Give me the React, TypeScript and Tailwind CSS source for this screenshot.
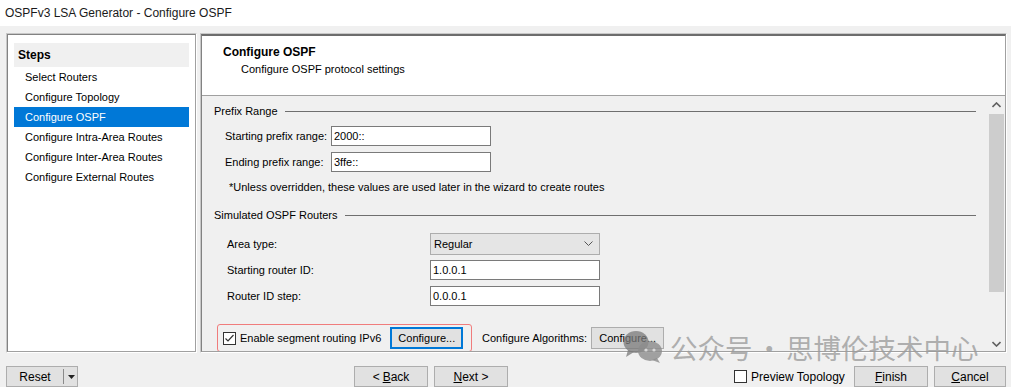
import { ReactNode } from "react";

const steps = [
    "Select Routers",
    "Configure Topology",
    "Configure OSPF",
    "Configure Intra-Area Routes",
    "Configure Inter-Area Routes",
    "Configure External Routes",
];

const WinButton = (props: { children: ReactNode; className?: string; focused?: boolean }) => (
    <div
        className={`flex items-center justify-center h-[21px] bg-[#e1e1e1] ${
            props.focused ? "border-2 border-[#0078d7]" : "border border-[#adadad]"
        } ${props.className ?? ""}`}
    >
        {props.children}
    </div>
);

const TextBox = (props: { value: string; className?: string }) => (
    <div className={`h-[20px] bg-white border border-[#7a7a7a] flex items-center pl-[2px] ${props.className ?? ""}`}>
        {props.value}
    </div>
);

const GroupLabel = (props: { text: string }) => (
    <div className="flex items-center h-[14px] pl-[12px] pr-[12px]">
        <span>{props.text}</span>
        <div className="ml-[7px] flex-1 h-px bg-[#6f6f6f]" />
    </div>
);

const CheckBox = () => (
    <div className="w-[13px] h-[13px] border border-[#333] bg-white flex items-center justify-center">
        <svg width="11" height="11" viewBox="0 0 11 11">
            <path d="M1.5 5.5 L4 8 L9.5 2" fill="none" stroke="#333" strokeWidth="1.2" />
        </svg>
    </div>
);

const App = () => {
    return (
        <div className="relative w-[1011px] h-[387px] bg-[#f0f0f0] overflow-hidden text-[11px] text-black font-['Liberation_Sans',Arial,sans-serif]">
            {/* title bar */}
            <div className="h-[26px] bg-white flex items-center pl-[5px] text-[12px] text-[#1a1a1a]">
                OSPFv3 LSA Generator - Configure OSPF
            </div>

            <div className="flex mt-[7px] pl-[6px] pr-[4px]">
                {/* steps panel */}
                <div className="w-[191px] h-[320px] border border-[#c8c8c8] border-r-white border-b-white">
                    <div className="h-full border border-[#828282] border-r-[#a0a0a0] border-b-[#a0a0a0] bg-white pt-[8px] px-[6px]">
                        <div className="h-[24px] bg-[#f0f0f0] flex items-center pl-[4px] font-bold text-[12px]">Steps</div>
                        {steps.map((step, index) => (
                            <div
                                key={index}
                                className={`h-[20px] flex items-center pl-[11px] ${
                                    index === 2 ? "bg-[#0078d7] text-white" : ""
                                }`}
                            >
                                {step}
                            </div>
                        ))}
                    </div>
                </div>

                {/* configure panel */}
                <div className="ml-[3px] flex-1 h-[320px] border border-[#c8c8c8] border-r-white border-b-white">
                    <div className="h-full flex flex-col border border-[#828282] border-t-2 border-t-[#6d6d6d] border-r-[#a0a0a0] border-b-[#a0a0a0] overflow-hidden">
                        <div className="h-[60px] bg-white border-b border-[#a0a0a0] pl-[21px] pt-[9px] shrink-0">
                            <div className="font-bold text-[12px] leading-[14px]">Configure OSPF</div>
                            <div className="pl-[18px] mt-[3px] leading-[14px]">Configure OSPF protocol settings</div>
                        </div>

                        <div className="flex flex-1 min-h-0">
                            <div className="flex-1 flex flex-col pt-[8px]">
                                <GroupLabel text="Prefix Range" />
                                <div className="flex items-center mt-[8px] pl-[23px]">
                                    <span className="w-[106px]">Starting prefix range:</span>
                                    <TextBox value="2000::" className="w-[160px]" />
                                </div>
                                <div className="flex items-center mt-[6px] pl-[23px]">
                                    <span className="w-[106px]">Ending prefix range:</span>
                                    <TextBox value="3ffe::" className="w-[160px]" />
                                </div>
                                <div className="mt-[8px] pl-[27px] h-[14px] leading-[14px]">
                                    *Unless overridden, these values are used later in the wizard to create routes
                                </div>
                                <div className="mt-[14px]">
                                    <GroupLabel text="Simulated OSPF Routers" />
                                </div>
                                <div className="flex items-center mt-[11px] pl-[25px]">
                                    <span className="w-[203px]">Area type:</span>
                                    <div className="w-[170px] h-[22px] bg-[#e5e5e5] border border-[#adadad] flex items-center justify-between pl-[3px] pr-[6px]">
                                        <span>Regular</span>
                                        <svg width="9" height="6" viewBox="0 0 9 6">
                                            <path d="M0.5 0.5 L4.5 4.5 L8.5 0.5" fill="none" stroke="#555" strokeWidth="1" />
                                        </svg>
                                    </div>
                                </div>
                                <div className="flex items-center mt-[5px] pl-[25px]">
                                    <span className="w-[203px]">Starting router ID:</span>
                                    <TextBox value="1.0.0.1" className="w-[170px]" />
                                </div>
                                <div className="flex items-center mt-[6px] pl-[25px]">
                                    <span className="w-[203px]">Router ID step:</span>
                                    <TextBox value="0.0.0.1" className="w-[170px]" />
                                </div>
                                <div className="flex items-center mt-[18px] pl-[15px]">
                                    <div className="w-[255px] h-[28px] border border-[#f07c7c] rounded-[3px] flex items-center pl-[5px]">
                                        <CheckBox />
                                        <span className="ml-[4px]">Enable segment routing IPv6</span>
                                        <WinButton focused className="ml-[9px] w-[73px] h-[22px]">Configure...</WinButton>
                                    </div>
                                    <span className="ml-[10px]">Configure Algorithms:</span>
                                    <WinButton className="ml-[4px] w-[73px] h-[22px]">Configure...</WinButton>
                                </div>
                            </div>

                            {/* scrollbar */}
                            <div className="w-[17px] flex flex-col bg-[#f0f0f0]">
                                <div className="h-[18px] flex items-center justify-center">
                                    <svg width="9" height="6" viewBox="0 0 9 6">
                                        <path d="M0.5 5 L4.5 1 L8.5 5" fill="none" stroke="#606060" strokeWidth="1.6" />
                                    </svg>
                                </div>
                                <div className="h-[178px] bg-[#cdcdcd] mx-[1px]" />
                                <div className="flex-1 flex items-end justify-center pb-[4px]">
                                    <svg width="9" height="6" viewBox="0 0 9 6">
                                        <path d="M0.5 1 L4.5 5 L8.5 1" fill="none" stroke="#606060" strokeWidth="1.6" />
                                    </svg>
                                </div>
                            </div>
                        </div>
                    </div>
                </div>
            </div>

            {/* bottom buttons */}
            <div className="flex items-center mt-[13px] pl-[6px] pr-[5px]">
                <div className="w-[72px] h-[21px] bg-[#e1e1e1] border border-[#adadad] flex items-center">
                    <span className="w-[56px] text-center text-[12px]">Reset</span>
                    <div className="w-px h-[15px] bg-[#8a8a8a]" />
                    <svg className="ml-[4px]" width="7" height="4" viewBox="0 0 7 4">
                        <path d="M0 0 L7 0 L3.5 4 Z" fill="#222" />
                    </svg>
                </div>
                <WinButton className="ml-[276px] w-[74px] text-[12px]">
                    &lt; <span className="underline ml-[3px]">B</span>ack
                </WinButton>
                <WinButton className="ml-[6px] w-[74px] text-[12px]">
                    <span className="underline">N</span>ext &gt;
                </WinButton>
                <div className="ml-[226px] flex items-center">
                    <div className="w-[13px] h-[13px] border border-[#333] bg-white" />
                    <span className="ml-[4px] text-[12px]">Preview Topology</span>
                </div>
                <WinButton className="ml-auto w-[74px] text-[12px]">
                    <span className="underline">F</span>inish
                </WinButton>
                <WinButton className="ml-[6px] w-[72px] text-[12px]">
                    <span className="underline">C</span>ancel
                </WinButton>
            </div>

            {/* watermark */}
            <div className="absolute left-[623px] top-[330px] flex items-center pointer-events-none">
                <svg width="40" height="33" viewBox="0 0 40 33">
                    <ellipse cx="13" cy="12" rx="12.5" ry="11" fill="#7a7a7a" fillOpacity="0.75" />
                    <path d="M5 20 L3 27 L11 22 Z" fill="#7a7a7a" fillOpacity="0.75" />
                    <ellipse cx="27" cy="21" rx="12" ry="10" fill="#8c8c8c" fillOpacity="0.8" />
                    <path d="M34 28 L37 33 L29 30 Z" fill="#8c8c8c" fillOpacity="0.8" />
                    <circle cx="23" cy="20" r="1.6" fill="#d8d8d8" />
                    <circle cx="31" cy="20" r="1.6" fill="#d8d8d8" />
                </svg>
                <div className="ml-[7px] flex items-center text-[27.5px] leading-[30px] text-[#9c9c9c]/80 font-['Noto_Sans_CJK_SC',sans-serif]">
                    <span>公众号</span>
                    <span className="mx-[3px]">·</span>
                    <span>思博伦技术中心</span>
                </div>
            </div>
        </div>
    );
};

export default App;
